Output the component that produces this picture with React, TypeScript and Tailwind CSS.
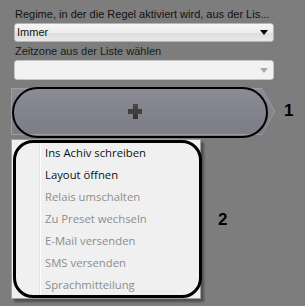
export default function App() {
  const items: { label: string; enabled: boolean }[] = [
    { label: "Ins Achiv schreiben", enabled: true },
    { label: "Layout öffnen", enabled: true },
    { label: "Relais umschalten", enabled: false },
    { label: "Zu Preset wechseln", enabled: false },
    { label: "E-Mail versenden", enabled: false },
    { label: "SMS versenden", enabled: false },
    { label: "Sprachmitteilung", enabled: false },
  ];
  return (
    <div className="relative w-[305px] h-[306px] overflow-hidden bg-[#7d7d7d] font-['Liberation_Sans',Arial,sans-serif]">
      <div className="flex flex-col pt-[7px]">
        <div className="ml-[15px] h-[15px] text-[11px] leading-[15px] text-[#111] whitespace-nowrap">
          Regime, in der die Regel aktiviert wird, aus der Lis...
        </div>
        <div className="ml-[14px] mt-[1px] w-[260px] h-[19px] rounded-[3px] border border-[#b5b5b5] bg-[linear-gradient(#f7f7f7,#ececec_50%,#dcdcdc_51%,#e8e8e8)] flex items-center justify-between pl-[2px] pr-[5px]">
          <span className="text-[11px] text-[#111] leading-none">Immer</span>
          <svg width="8" height="5" viewBox="0 0 8 5"><path d="M0 0h8L4 5z" fill="#000" /></svg>
        </div>
        <div className="ml-[15px] mt-[2px] h-[14px] text-[11px] leading-[14px] text-[#1a1a1a] whitespace-nowrap">
          Zeitzone aus der Liste wählen
        </div>
        <div className="ml-[14px] mt-[2px] w-[260px] h-[20px] rounded-[3px] border border-[#c4c4c4] bg-[#f2f2f2] flex items-center justify-end pr-[5px]">
          <svg width="8" height="5" viewBox="0 0 8 5"><path d="M0 0h8L4 5z" fill="#a8a8a8" /></svg>
        </div>
        <div className="ml-[11px] mt-[8px] w-[264px] h-[47px] bg-[#9c9da5] [clip-path:polygon(0_0,calc(100%_-_13px)_0,100%_50%,calc(100%_-_13px)_100%,0_100%)] p-[1px]">
          <div className="w-full h-full bg-[linear-gradient(#8a8b95,#81828c_60%,#7c7d87)] [clip-path:polygon(0_0,calc(100%_-_12px)_0,100%_50%,calc(100%_-_12px)_100%,0_100%)] flex items-center justify-center pr-[16px]">
            <div className="relative w-[14px] h-[15px]">
              <div className="absolute left-[5px] top-0 w-[5px] h-[15px] bg-[linear-gradient(#4a4a4a,#333)]" />
              <div className="absolute left-0 top-[5px] w-[14px] h-[5px] bg-[#404040]" />
            </div>
          </div>
        </div>
        <div className="ml-[11px] mt-[4px] w-[190px] bg-[#f0f0f0] border border-[#a0a0a0] shadow-[3px_3px_2px_rgba(0,0,0,0.35)] py-[2px] relative font-['Open_Sans','Noto_Sans',sans-serif]">
          <div className="absolute left-[27px] top-[2px] bottom-[2px] w-[2px] bg-[#e2e2e2] border-r border-white" />
          {items.map((it) => (
            <div
              key={it.label}
              className={`h-[22px] flex items-center pl-[33px] text-[11.3px] leading-none ${it.enabled ? "text-[#111]" : "text-[#8d8d8d]"}`}
            >
              {it.label}
            </div>
          ))}
        </div>
      </div>

      <div className="absolute left-[12px] top-[87px] w-[256px] h-[51px] rounded-[26px] border-[2px] border-black" />
      <div className="absolute left-[13px] top-[140px] w-[189px] h-[158px] rounded-[20px] border-[3px] border-black" />
      <div className="absolute left-[284px] top-[101px] text-[17px] font-bold leading-[20px] text-black">1</div>
      <div className="absolute left-[218px] top-[210px] text-[17px] font-bold leading-[20px] text-black">2</div>
    </div>
  );
}
